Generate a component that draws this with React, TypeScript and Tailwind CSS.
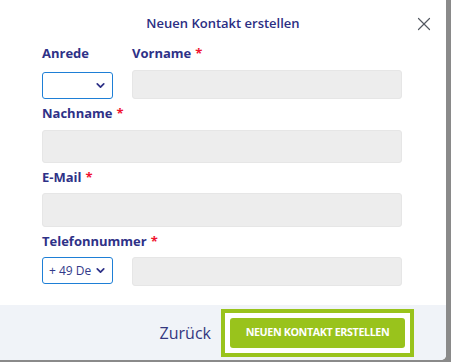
import React from 'react'
import { ChevronDown, X } from 'lucide-react'

const labelCls = "block text-[13px] leading-[18px] font-bold text-[#2e3187]"
const inputCls = "block w-full rounded-[3px] bg-[#ededed] border border-[#e6e6e6]"

const Label: React.FC<{ text: string; required?: boolean }> = ({ text, required }) => (
    <label className={labelCls}>
        {text}
        {required && <span className="text-[#f0142f] ml-[4px]">*</span>}
    </label>
)

const SelectBox: React.FC<{ value?: string }> = ({ value }) => (
    <div className="flex h-[27px] w-[71px] items-center justify-between rounded-[3px] border border-[#1e7fd6] bg-white pl-[6px] pr-[5px]">
        <span className="text-[12px] text-[#333a8a]">{value ?? ''}</span>
        <ChevronDown size={13} strokeWidth={3.2} className="text-[#2e3187]" />
    </div>
)

const App: React.FC = () => {
    return (
        <div className="h-[362px] w-[451px] overflow-hidden bg-[#8a8a8a] font-['Open_Sans',sans-serif]">
            <div className="flex h-[360px] w-[446px] flex-col rounded-br-[5px] bg-white">
                {/* header */}
                <div className="relative flex h-[44px] shrink-0 items-center justify-center pt-[4px]">
                    <h2 className="text-[13px] font-semibold text-[#2b2e83]">Neuen Kontakt erstellen</h2>
                    <button type="button" className="absolute right-[11px] top-[13px] text-[#555a62]">
                        <X size={22} strokeWidth={1.3} />
                    </button>
                </div>

                {/* form */}
                <div className="flex flex-1 flex-col pl-[42px] pr-[44px]">
                    <div className="flex gap-[19px]">
                        <div className="w-[71px]">
                            <Label text="Anrede" />
                            <div className="mt-[10px]">
                                <SelectBox />
                            </div>
                        </div>
                        <div className="flex-1">
                            <Label text="Vorname" required />
                            <div className="mt-[8px]">
                                <div className={`${inputCls} h-[29px]`} />
                            </div>
                        </div>
                    </div>

                    <div className="mt-[5px]">
                        <Label text="Nachname" required />
                        <div className={`${inputCls} mt-[8px] h-[33px]`} />
                    </div>

                    <div className="mt-[5px]">
                        <Label text="E-Mail" required />
                        <div className={`${inputCls} mt-[7px] h-[34px]`} />
                    </div>

                    <div className="mt-[5px]">
                        <Label text="Telefonnummer" required />
                        <div className="mt-[7px] flex gap-[19px]">
                            <SelectBox value="+ 49 De" />
                            <div className={`${inputCls} h-[29px] flex-1`} />
                        </div>
                    </div>
                </div>

                {/* footer */}
                <div className="flex h-[55px] shrink-0 items-center justify-end gap-[10px] rounded-br-[5px] bg-[#f0f3f8] pr-[32px]">
                    <button type="button" className="text-[16px] text-[#33377f]">Zurück</button>
                    <div className="border-[4px] border-[#99c31c] bg-white p-[5px]">
                        <button
                            type="button"
                            className="flex h-[30px] w-[175px] items-center justify-center rounded-[3px] bg-[#99c31c] text-[10.75px] font-bold tracking-[-0.4px] text-white"
                        >
                            NEUEN KONTAKT ERSTELLEN
                        </button>
                    </div>
                </div>
            </div>
        </div>
    )
}

export default App
